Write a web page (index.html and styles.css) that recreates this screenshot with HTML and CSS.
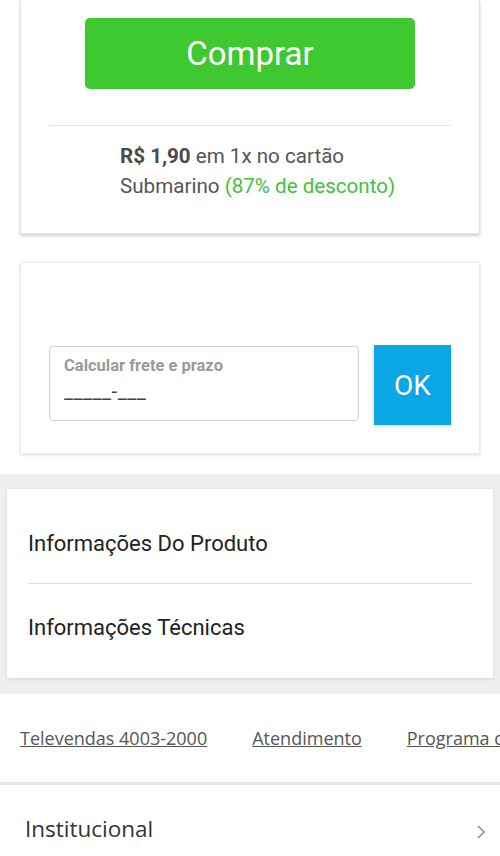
FILE: index.html
```html
<!DOCTYPE html>
<html lang="pt-BR">
<head>
    <meta charset="UTF-8">
    <meta name="viewport" content="width=device-width, initial-scale=1.0">
    <title>Produto</title>
    <link rel="stylesheet" href="styles.css">
</head>
<body>
    <div class="buy-card">
        <button class="buy-btn">Comprar</button>
        <div class="price-info">
            <p class="price-line"><strong>R$ 1,90</strong> em 1x no cartão</p>
            <p class="price-line">Submarino <span class="discount">(87% de desconto)</span></p>
        </div>
    </div>

    <div class="shipping-card">
        <div class="cep-field">
            <span class="cep-label">Calcular frete e prazo</span>
            <span class="cep-mask">_____-___</span>
        </div>
        <button class="ok-btn">OK</button>
    </div>

    <div class="info-band">
        <div class="info-card">
            <div class="info-row">Informações Do Produto</div>
            <div class="info-row">Informações Técnicas</div>
        </div>
    </div>

    <div class="footer-links">
        <a href="#">Televendas 4003-2000</a>
        <a href="#">Atendimento</a>
        <a href="#">Programa d</a>
    </div>

    <div class="footer-menu">
        <span>Institucional</span>
        <svg class="chevron" width="10" height="16" viewBox="0 0 10 16">
            <path d="M2 2 L8 8 L2 14" fill="none" stroke="#888" stroke-width="1.4"/>
        </svg>
    </div>
</body>
</html>
```

FILE: styles.css
```css
* {
    box-sizing: border-box;
}

body {
    margin: 0;
    padding: 0;
    font-family: Roboto, "Noto Sans", sans-serif;
    background-color: #fff;
    width: 500px;
    overflow: hidden;
}

.buy-card {
    margin: 0 20px;
    padding: 18px 28px 0;
    height: 234px;
    background-color: #fff;
    border: 1px solid #e2e2e2;
    border-top: none;
    box-shadow: 0 2px 3px rgba(0, 0, 0, 0.18);
}

.buy-btn {
    display: block;
    width: 330px;
    height: 71px;
    margin: 0 auto;
    border: none;
    border-radius: 5px;
    background-color: #3fc931;
    color: #fff;
    font-family: Roboto, sans-serif;
    font-size: 33px;
    cursor: pointer;
}

.price-info {
    margin-top: 36px;
    padding: 15px 0 0 71px;
    border-top: 1px solid #e6e6e6;
}

.price-line {
    margin: 0;
    font-size: 20.6px;
    line-height: 30px;
    color: #555;
}

.price-line strong {
    font-weight: 700;
    color: #4a4a4a;
}

.discount {
    color: #45bf3c;
}

.shipping-card {
    margin: 28px 20px 0;
    height: 192px;
    padding: 83px 28px 0;
    display: flex;
    gap: 15px;
    background-color: #fff;
    border: 1px solid #ececec;
    box-shadow: 0 1px 3px rgba(0, 0, 0, 0.15);
}

.cep-field {
    width: 310px;
    height: 75px;
    border: 1px solid #d2d2d2;
    border-radius: 4px;
    padding: 9px 14px 0;
    display: flex;
    flex-direction: column;
}

.cep-label {
    font-size: 16.5px;
    font-weight: 700;
    color: #9a9a9a;
}

.cep-mask {
    margin-top: 4px;
    font-size: 20px;
    color: #444;
    letter-spacing: 0.5px;
}

.ok-btn {
    width: 77px;
    height: 80px;
    margin-top: -1px;
    border: none;
    background-color: #0aa6e5;
    color: #fff;
    font-family: Roboto, sans-serif;
    font-size: 28px;
    box-shadow: 0 1px 3px rgba(0, 0, 0, 0.2);
}

.info-band {
    margin-top: 20px;
    padding: 15px 7px 16px;
    background-color: #efefef;
}

.info-card {
    background-color: #fff;
    padding: 0 21px;
    box-shadow: 0 1px 3px rgba(0, 0, 0, 0.12);
}

.info-row {
    height: 94px;
    padding-top: 55px;
    font-size: 22px;
    color: #222;
    line-height: 0;
}

.info-row + .info-row {
    border-top: 1px solid #dcdcdc;
    height: 95px;
    padding-top: 44px;
}

.footer-links {
    height: 91px;
    display: flex;
    align-items: center;
    gap: 45px;
    padding-left: 20px;
    white-space: nowrap;
    overflow: hidden;
    border-bottom: 3px solid #e6e6e6;
}

.footer-links a {
    font-family: "Open Sans", sans-serif;
    font-size: 18px;
    color: #555;
    text-decoration: underline;
}

.footer-menu {
    display: flex;
    justify-content: space-between;
    align-items: center;
    padding: 28px 14px 0 25px;
    font-family: "Open Sans", sans-serif;
    font-size: 22.5px;
    color: #333;
}

.chevron {
    margin-top: 6px;
}
```
